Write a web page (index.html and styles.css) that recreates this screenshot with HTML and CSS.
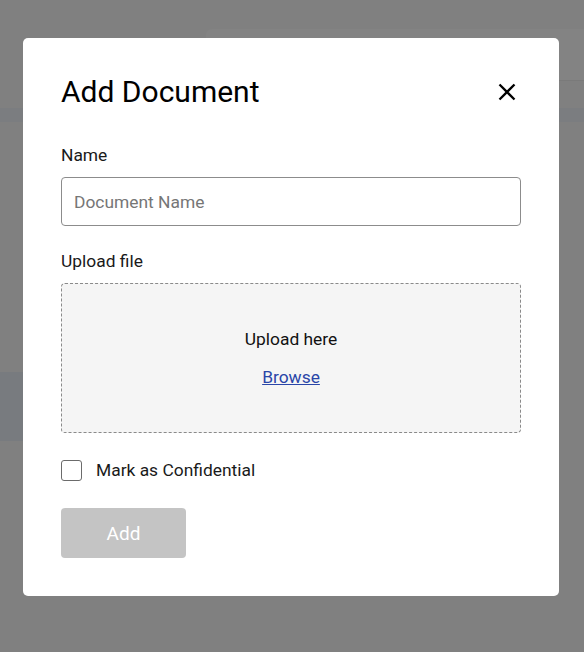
FILE: index.html
```html
<!DOCTYPE html>
<html lang="en">
<head>
    <meta charset="UTF-8">
    <meta name="viewport" content="width=device-width, initial-scale=1.0">
    <title>Add Document</title>
    <link rel="stylesheet" href="styles.css">
</head>
<body>
    <div class="page">
        <div class="topPanel"></div>
        <div class="band"></div>
        <div class="sideCard"></div>
    </div>

    <div class="overlay">
        <div class="modal">
            <div class="modalHeader">
                <h1>Add Document</h1>
                <button class="closeButton" aria-label="Close">
                    <svg width="18" height="18" viewBox="0 0 18 18">
                        <path d="M1.5 1.5 L16.5 16.5 M16.5 1.5 L1.5 16.5" stroke="#000" stroke-width="2.3" fill="none"/>
                    </svg>
                </button>
            </div>

            <div class="field">
                <label class="fieldLabel" for="docName">Name</label>
                <input id="docName" class="textInput" type="text" placeholder="Document Name">
            </div>

            <div class="field">
                <div class="fieldLabel">Upload file</div>
                <div class="dropZone">
                    <div>Upload here</div>
                    <a href="#" class="browseLink">Browse</a>
                </div>
            </div>

            <label class="checkRow">
                <input type="checkbox" class="checkBox">
                <span>Mark as Confidential</span>
            </label>

            <button class="addButton" disabled>Add</button>
        </div>
    </div>
</body>
</html>
```

FILE: styles.css
```css
body {
    margin: 0;
    padding: 0;
    font-family: Roboto, "Liberation Sans", Arial, sans-serif;
    background-color: #808080;
    height: 652px;
    overflow: hidden;
}

/* dimmed page behind the dialog */
.page {
    display: flex;
    flex-direction: column;
}

.topPanel {
    margin-top: 29px;
    margin-left: 206px;
    height: 51px;
    background-color: #838383;
    border-top-left-radius: 6px;
    border-bottom: 1px solid #7a7a7a;
}

.band {
    margin-top: 27px;
    height: 14px;
    background-color: #7b7d80;
}

.sideCard {
    margin-top: 250px;
    width: 40px;
    height: 69px;
    background-color: #787b7f;
}

/* dialog */
.overlay {
    position: fixed;
    top: 0;
    left: 0;
    width: 100%;
    height: 100%;
    display: flex;
    justify-content: center;
    align-items: flex-start;
}

.modal {
    margin-top: 38px;
    margin-left: -2px;
    width: 460px;
    padding: 38px;
    background-color: #fff;
    border-radius: 5px;
    display: flex;
    flex-direction: column;
    color: #1c1c1c;
}

.modalHeader {
    display: flex;
    justify-content: space-between;
    align-items: center;
    height: 32px;
}

h1 {
    margin: 0;
    font-size: 30px;
    font-weight: 400;
    line-height: 32px;
    color: #000;
}

.closeButton {
    width: 28px;
    height: 28px;
    padding: 0;
    border: none;
    background: none;
    display: flex;
    align-items: center;
    justify-content: center;
    cursor: pointer;
    margin-top: -1px;
}

.field {
    display: flex;
    flex-direction: column;
    margin-top: 37px;
}

.field + .field {
    margin-top: 25px;
}

.fieldLabel {
    font-size: 17.4px;
    line-height: 20px;
    margin-bottom: 12px;
    color: #1a1a1a;
}

.textInput {
    box-sizing: border-box;
    height: 49px;
    padding: 0 12px;
    border: 1px solid #8c8c8c;
    border-radius: 4px;
    font-family: inherit;
    font-size: 17.4px;
    color: #222;
}

.textInput::placeholder {
    color: #767676;
}

.dropZone {
    box-sizing: border-box;
    height: 150px;
    border: 1px dashed #8a8a8a;
    border-radius: 4px;
    background-color: #f5f5f5;
    display: flex;
    flex-direction: column;
    align-items: center;
    justify-content: center;
    gap: 18px;
    font-size: 17.4px;
    line-height: 20px;
    color: #111;
}

.browseLink {
    color: #2a46a8;
    text-decoration: underline;
}

.checkRow {
    display: flex;
    align-items: center;
    gap: 14px;
    margin-top: 27px;
    font-size: 17.4px;
    line-height: 21px;
    color: #1a1a1a;
}

.checkBox {
    appearance: none;
    box-sizing: border-box;
    width: 21px;
    height: 21px;
    margin: 0;
    border: 1.5px solid #6b6b6b;
    border-radius: 3px;
    background-color: #fff;
}

.addButton {
    margin-top: 27px;
    width: 125px;
    height: 50px;
    border: none;
    border-radius: 4px;
    background-color: #c4c4c4;
    color: #fff;
    font-family: inherit;
    font-size: 19px;
    font-weight: 400;
}
```
